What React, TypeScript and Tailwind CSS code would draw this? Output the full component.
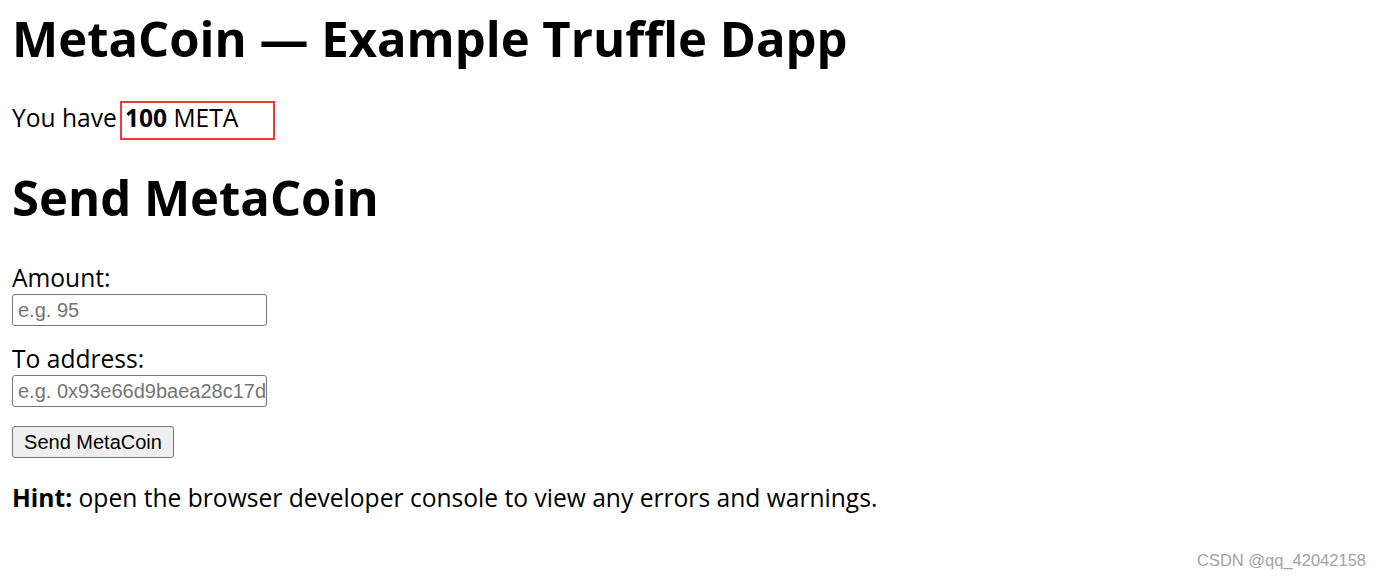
export default function App() {
  return (
    <div className="h-[579px] overflow-hidden bg-white pl-[12px] text-black font-['Open_Sans',sans-serif]">
      <h1 className="mt-[14px] text-[49px] font-bold leading-[49px] whitespace-nowrap">MetaCoin — Example Truffle Dapp</h1>

      <div className="mt-[38px] flex items-baseline text-[24.6px] leading-[34px] whitespace-nowrap">
        <span>You have</span>
        <span className="ml-[3px] box-border inline-block h-[39px] w-[155px] border-[2.5px] border-[#ef3a3a] pl-[3px] leading-[30px]">
          <strong className="font-bold">100</strong> META
        </span>
      </div>

      <h2 className="mt-[33px] text-[49px] font-bold leading-[49px] whitespace-nowrap">Send MetaCoin</h2>

      <div className="mt-[39px] text-[24.6px] leading-[33px]">Amount:</div>
      <input
        type="text"
        placeholder="e.g. 95"
        className="box-border block h-[32px] w-[255px] rounded-[3px] border border-[#767676] pl-[5px] text-[20px] font-['Liberation_Sans',Arial,sans-serif] placeholder:text-[#757575] outline-none"
      />

      <div className="mt-[17px] text-[24.6px] leading-[32px]">To address:</div>
      <input
        type="text"
        placeholder="e.g. 0x93e66d9baea28c17d9fc393b53e3fbdd76899dae"
        className="box-border block h-[32px] w-[255px] rounded-[3px] border border-[#767676] pl-[5px] text-[20px] font-['Liberation_Sans',Arial,sans-serif] placeholder:text-[#757575] outline-none"
      />

      <button
        type="button"
        className="mt-[19px] box-border block h-[32px] w-[162px] rounded-[3px] border border-[#767676] bg-[#efefef] text-center text-[20px] text-black font-['Liberation_Sans',Arial,sans-serif]"
      >
        Send MetaCoin
      </button>

      <p className="mt-[23px] text-[24.6px] leading-[34px] whitespace-nowrap">
        <strong className="font-bold">Hint:</strong> open the browser developer console to view any errors and warnings.
      </p>

      <div className="mt-[35px] flex justify-end pr-[14px]">
        <span className="text-[16.5px] leading-[20px] text-[#a3a3a3] font-['Liberation_Sans',Arial,sans-serif]">CSDN @qq_42042158</span>
      </div>
    </div>
  )
}
